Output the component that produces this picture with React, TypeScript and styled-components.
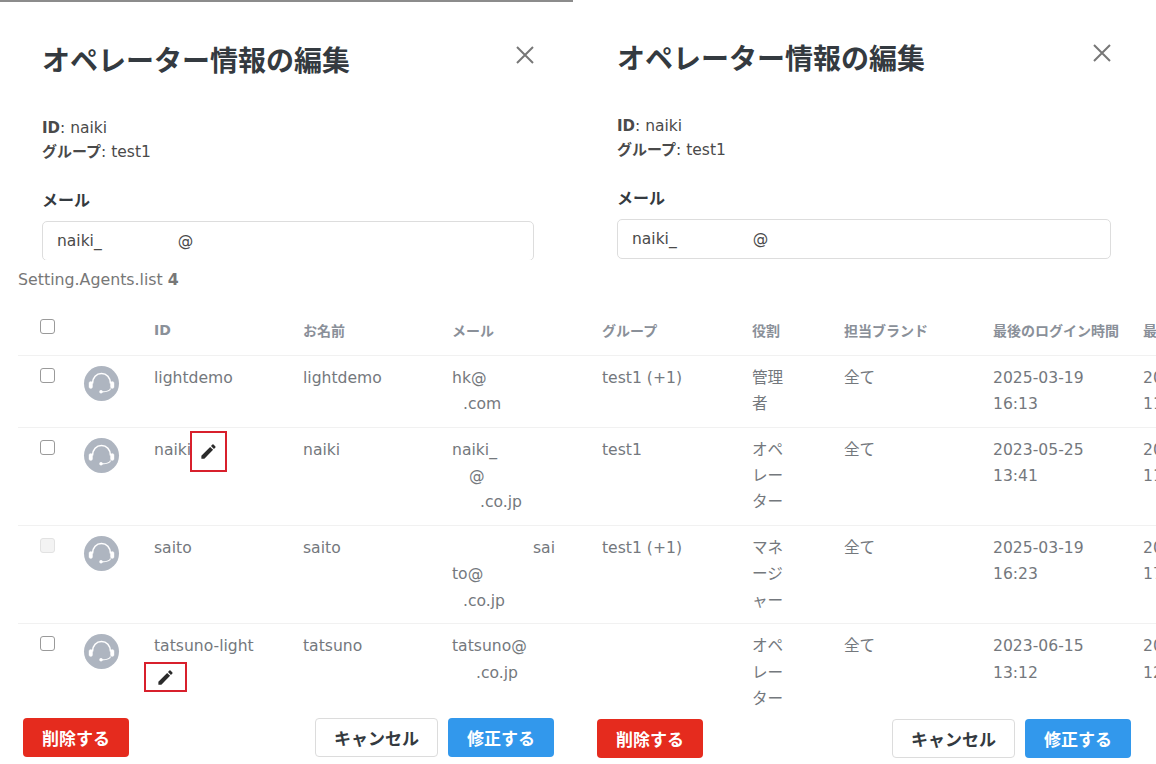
import styled, { createGlobalStyle } from "styled-components";
import { MdEdit } from "react-icons/md";

const GlobalStyle = createGlobalStyle`
  html, body {
    margin: 0;
    background: #fff;
    overflow: hidden;
  }
  * {
    box-sizing: border-box;
  }
  body {
    font-family: "DejaVu Sans", "Noto Sans CJK JP", sans-serif;
    color: #4a4a4a;
  }
`;

const Page = styled.div`
  width: 1156px;
  height: 764px;
  display: flex;
  flex-direction: column;
  overflow: hidden;
`;

const ModalRow = styled.div`
  display: flex;
  height: 262px;
`;

const ModalPane = styled.section<{ $first?: boolean }>`
  width: ${(p) => (p.$first ? "573px" : "583px")};
  height: ${(p) => (p.$first ? "260px" : "262px")};
  overflow: hidden;
  padding: 40px ${(p) => (p.$first ? "39px 0 42px" : "45px 0 44px")};
  ${(p) => p.$first && "border-top: 2px solid #8c8c8c;"}
`;

const ModalHead = styled.div`
  display: flex;
  justify-content: space-between;
  align-items: flex-start;
`;

const Title = styled.h2`
  margin: 0;
  font-family: "Noto Sans CJK JP", sans-serif;
  font-size: 28px;
  line-height: 34px;
  font-weight: 700;
  color: #343a40;
`;

const CloseIcon = styled.svg`
  width: 18px;
  height: 18px;
  margin-top: 4px;
  stroke: #777;
  stroke-width: 2;
  fill: none;
`;

const Info = styled.div`
  margin-top: 40px;
  font-size: 15.5px;
  line-height: 24px;
`;

const InfoKey = styled.span`
  font-weight: 700;
  font-size: 15px;
`;

const FieldLabel = styled.div`
  margin-top: 25px;
  font-size: 16px;
  line-height: 24px;
  font-weight: 700;
  color: #343a40;
`;

const Field = styled.div`
  margin-top: 8px;
  height: 40px;
  padding: 0 14px;
  display: flex;
  align-items: center;
  border: 1px solid #ddd;
  border-radius: 5px;
  font-size: 15.5px;
`;

const MaskGap = styled.span`
  width: 76px;
`;

const ClippedAt = styled.span`
  width: 15px;
  overflow: hidden;
`;

const TableArea = styled.section`
  height: 450px;
  overflow: hidden;
  padding-left: 18px;
  color: #74787d;
`;

const ListTitle = styled.div`
  height: 34px;
  display: flex;
  align-items: center;
  font-size: 15.8px;
  color: #777;

  b {
    margin-left: 5px;
    font-weight: 700;
  }
`;

const columns = "44px 70px 149px 149px 150px 150px 92px 149px 150px 150px";

const HeaderRow = styled.div`
  display: grid;
  grid-template-columns: ${columns};
  align-items: center;
  height: 60px;
  padding: 8px 0 0 22px;
  width: 1138px;
  border-bottom: 1px solid #f1f1f1;
  font-size: 14px;
  font-weight: 700;
  color: #8a9099;
  white-space: nowrap;
`;

const HeadCheck = styled.div`
  margin-top: -6px;
`;

const Row = styled.div`
  display: grid;
  grid-template-columns: ${columns};
  align-items: start;
  padding: 9px 0 9.3px 22px;
  width: 1138px;
  border-bottom: 1px solid #f1f1f1;
  font-size: 15.6px;
  line-height: 26.3px;
`;

const Checkbox = styled.span<{ $disabled?: boolean }>`
  display: block;
  width: 15px;
  height: 15px;
  border: 1.5px solid ${(p) => (p.$disabled ? "#e2e2e2" : "#9a9a9a")};
  border-radius: 3px;
  background: ${(p) => (p.$disabled ? "#f3f3f3" : "#fff")};
`;

const RowCheck = styled.div`
  padding-top: 3px;
`;

const Avatar = styled.div`
  width: 35px;
  height: 35px;
  margin-top: 1px;
  border-radius: 50%;
  background: #aeb5c0;
`;

const AvatarIcon = styled.svg`
  display: block;
  width: 35px;
  height: 35px;
  fill: none;
  stroke: #fff;
`;

const IdCell = styled.div`
  position: relative;
`;

const Marker = styled.div<{ $left: number; $top: number; $width: number; $height: number }>`
  position: absolute;
  left: ${(p) => p.$left}px;
  top: ${(p) => p.$top}px;
  width: ${(p) => p.$width}px;
  height: ${(p) => p.$height}px;
  display: flex;
  align-items: center;
  justify-content: center;
  border: 2px solid #d8202c;
  background: #fff;
  color: #2b2b2b;
  font-size: 19px;
`;

const MailLine = styled.div<{ $indent?: number }>`
  padding-left: ${(p) => p.$indent ?? 0}px;
  white-space: nowrap;
`;

const Footer = styled.div`
  display: flex;
  height: 52px;
`;

const FooterPane = styled.div<{ $first?: boolean }>`
  width: ${(p) => (p.$first ? "573px" : "583px")};
  padding: ${(p) => (p.$first ? "6px 19px 0 23px" : "7px 25px 0 24px")};
  display: flex;
  align-items: flex-start;
  gap: 10px;
`;

const Button = styled.button<{ $kind: "danger" | "plain" | "primary" }>`
  height: 39px;
  width: ${(p) => (p.$kind === "plain" ? "123px" : "106px")};
  border-radius: 4px;
  border: 1px solid ${(p) => (p.$kind === "plain" ? "#dcdcdc" : "transparent")};
  background: ${(p) =>
    p.$kind === "danger" ? "#e52b1e" : p.$kind === "primary" ? "#3298ec" : "#fff"};
  color: ${(p) => (p.$kind === "plain" ? "#343a40" : "#fff")};
  font-family: "Noto Sans CJK JP", sans-serif;
  font-size: 17px;
  font-weight: 700;
  padding: 0;
  ${(p) => p.$kind === "danger" && "margin-right: auto;"}
`;

type Agent = {
  id: string;
  name: string;
  mail: { text: string; indent?: number }[];
  group: string;
  role: string[];
  login: string[];
  next: string[];
  disabled?: boolean;
  marker?: { left: number; top: number; width: number; height: number };
};

const agents: Agent[] = [
  {
    id: "lightdemo",
    name: "lightdemo",
    mail: [{ text: "hk@" }, { text: ".com", indent: 11 }],
    group: "test1 (+1)",
    role: ["管理", "者"],
    login: ["2025-03-19", "16:13"],
    next: ["20", "11"],
  },
  {
    id: "naiki",
    name: "naiki",
    mail: [{ text: "naiki_" }, { text: "@", indent: 17 }, { text: ".co.jp", indent: 28 }],
    group: "test1",
    role: ["オペ", "レー", "ター"],
    login: ["2023-05-25", "13:41"],
    next: ["20", "11"],
    marker: { left: 36, top: -6, width: 37, height: 41 },
  },
  {
    id: "saito",
    name: "saito",
    mail: [{ text: "sai", indent: 81 }, { text: "to@" }, { text: ".co.jp", indent: 11 }],
    group: "test1 (+1)",
    role: ["マネ", "ージ", "ャー"],
    login: ["2025-03-19", "16:23"],
    next: ["20", "17"],
    disabled: true,
  },
  {
    id: "tatsuno-light",
    name: "tatsuno",
    mail: [{ text: "tatsuno@" }, { text: ".co.jp", indent: 24 }],
    group: "",
    role: ["オペ", "レー", "ター"],
    login: ["2023-06-15", "13:12"],
    next: ["20", "12"],
    marker: { left: -10, top: 29, width: 43, height: 30 },
  },
];

function EditModal({ first }: { first?: boolean }) {
  return (
    <ModalPane $first={first}>
      <ModalHead>
        <Title>オペレーター情報の編集</Title>
        <CloseIcon viewBox="0 0 18 18">
          <path d="M1 1L17 17M17 1L1 17" />
        </CloseIcon>
      </ModalHead>
      <Info>
        <div>
          <InfoKey>ID</InfoKey>: naiki
        </div>
        <div>
          <InfoKey>グループ</InfoKey>: test1
        </div>
      </Info>
      <FieldLabel>メール</FieldLabel>
      <Field>
        naiki_
        <MaskGap />
        <ClippedAt>@</ClippedAt>
      </Field>
    </ModalPane>
  );
}

function HeadsetAvatar() {
  return (
    <Avatar>
      <AvatarIcon viewBox="0 0 35 35">
        <path d="M8.5 17.5C8.5 11.5 12.5 7.5 17.5 7.5S26.5 11.5 26.5 17.5" strokeWidth="1.6" />
        <rect x="5" y="15.5" width="3.5" height="7" rx="1.7" fill="#fff" strokeWidth="0.4" />
        <rect x="26.5" y="15.5" width="3.5" height="7" rx="1.7" fill="#fff" strokeWidth="0.4" />
        <path d="M26.5 22.5C26 25 23.5 25.8 18 25.8" strokeWidth="1.2" />
        <circle cx="17" cy="25.8" r="1.7" fill="#fff" strokeWidth="0" />
      </AvatarIcon>
    </Avatar>
  );
}

function FooterButtons({ first }: { first?: boolean }) {
  return (
    <FooterPane $first={first}>
      <Button $kind="danger">削除する</Button>
      <Button $kind="plain">キャンセル</Button>
      <Button $kind="primary">修正する</Button>
    </FooterPane>
  );
}

export default function App() {
  return (
    <Page>
      <GlobalStyle />
      <ModalRow>
        <EditModal first />
        <EditModal />
      </ModalRow>

      <TableArea>
        <ListTitle>
          Setting.Agents.list <b>4</b>
        </ListTitle>
        <HeaderRow>
          <HeadCheck>
            <Checkbox />
          </HeadCheck>
          <div></div>
          <div>ID</div>
          <div>お名前</div>
          <div>メール</div>
          <div>グループ</div>
          <div>役割</div>
          <div>担当ブランド</div>
          <div>最後のログイン時間</div>
          <div>最</div>
        </HeaderRow>
        {agents.map((agent) => (
          <Row key={agent.id}>
            <RowCheck>
              <Checkbox $disabled={agent.disabled} />
            </RowCheck>
            <HeadsetAvatar />
            <IdCell>
              {agent.id}
              {agent.marker && (
                <Marker
                  $left={agent.marker.left}
                  $top={agent.marker.top}
                  $width={agent.marker.width}
                  $height={agent.marker.height}
                >
                  <MdEdit />
                </Marker>
              )}
            </IdCell>
            <div>{agent.name}</div>
            <div>
              {agent.mail.map((line) => (
                <MailLine key={line.text} $indent={line.indent}>
                  {line.text}
                </MailLine>
              ))}
            </div>
            <div>{agent.group}</div>
            <div>
              {agent.role.map((line, i) => (
                <div key={i}>{line}</div>
              ))}
            </div>
            <div>全て</div>
            <div>
              {agent.login.map((line) => (
                <div key={line}>{line}</div>
              ))}
            </div>
            <div>
              {agent.next.map((line) => (
                <div key={line}>{line}</div>
              ))}
            </div>
          </Row>
        ))}
      </TableArea>

      <Footer>
        <FooterButtons first />
        <FooterButtons />
      </Footer>
    </Page>
  );
}
